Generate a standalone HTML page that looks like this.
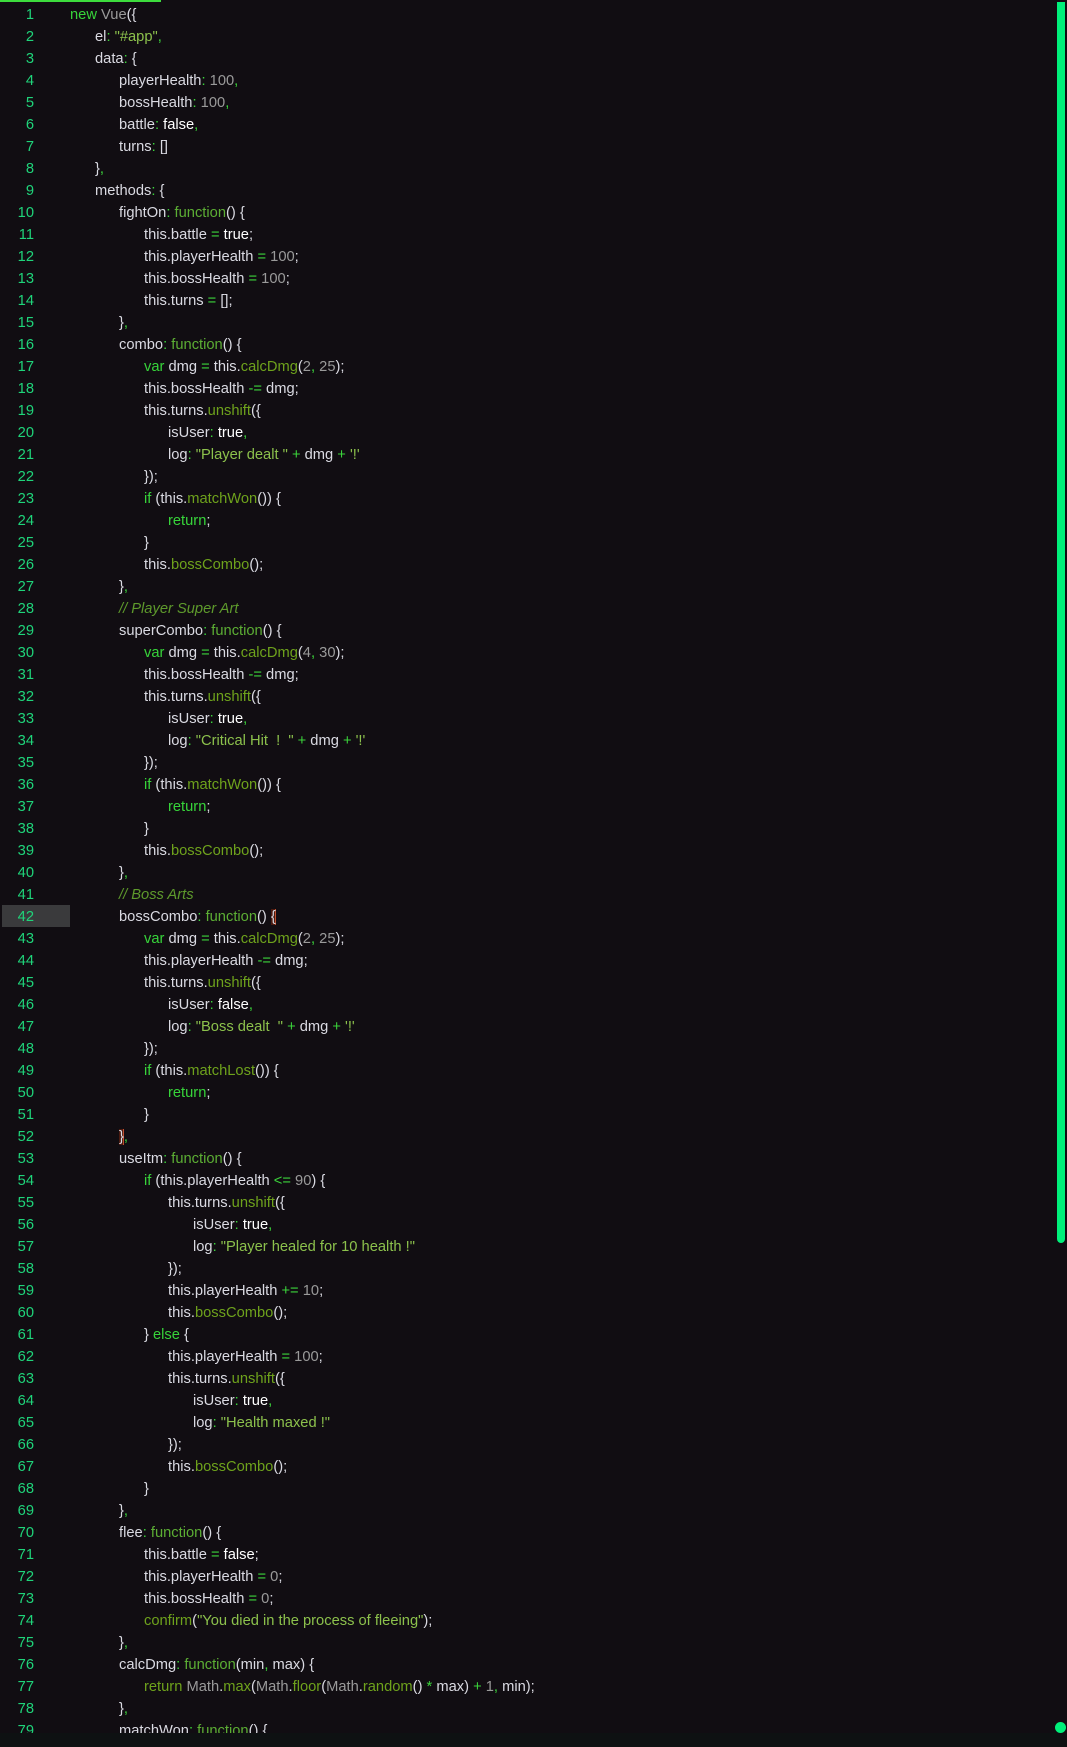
<!DOCTYPE html>
<html><head><meta charset="utf-8"><style>
html,body{margin:0;padding:0;background:#110d12;width:1067px;height:1747px;overflow:hidden;position:relative}
#top{position:absolute;left:0;top:0;width:161px;height:2px;background:#3ddc3d}
#code{position:absolute;top:4px;left:0;font-family:"Liberation Sans",sans-serif;font-size:14.7px;color:#dadae2}
.l{height:22px;line-height:22px;position:relative;white-space:pre}
.ln{position:absolute;left:0;width:34px;text-align:right;color:#1fd47a}
.t{position:absolute;top:0}
.hl{position:absolute;left:2px;top:-1px;width:68px;height:22px;background:#3a3a3c}
.k{color:#37d43a}.f{color:#5cae34}.m{color:#6ea21c}.n{color:#9a9a9a}.s{color:#8cc14c}.p{color:#3bd43b}.c{color:#5e9a2c;font-style:italic}.w{color:#fff}
#sb{position:absolute;left:1057px;top:2px;width:8px;height:1241px;background:#00f07a;border-radius:0 0 4px 4px}
#dot{position:absolute;left:1055px;top:1722px;width:11px;height:11px;border-radius:50%;background:#00f07a}
#bot{position:absolute;left:0;top:1733px;width:1067px;height:14px;background:#0e1112}
.br{background:#4a1a10;box-shadow:inset -1px 0 0 #c05030}
</style></head><body>
<div id="top"></div>
<div id="code">
<div class="l"><span class="ln">1</span><span class="t" style="left:70px"><span class="k">new</span> <span class="n">Vue</span>({</span></div>
<div class="l"><span class="ln">2</span><span class="t" style="left:95px">el<span class="p">:</span> <span class="s">"#app"</span><span class="p">,</span></span></div>
<div class="l"><span class="ln">3</span><span class="t" style="left:95px">data<span class="p">:</span> {</span></div>
<div class="l"><span class="ln">4</span><span class="t" style="left:119px">playerHealth<span class="p">:</span> <span class="n">100</span><span class="p">,</span></span></div>
<div class="l"><span class="ln">5</span><span class="t" style="left:119px">bossHealth<span class="p">:</span> <span class="n">100</span><span class="p">,</span></span></div>
<div class="l"><span class="ln">6</span><span class="t" style="left:119px">battle<span class="p">:</span> <span class="w">false</span><span class="p">,</span></span></div>
<div class="l"><span class="ln">7</span><span class="t" style="left:119px">turns<span class="p">:</span> []</span></div>
<div class="l"><span class="ln">8</span><span class="t" style="left:95px">}<span class="p">,</span></span></div>
<div class="l"><span class="ln">9</span><span class="t" style="left:95px">methods<span class="p">:</span> {</span></div>
<div class="l"><span class="ln">10</span><span class="t" style="left:119px">fightOn<span class="p">:</span> <span class="f">function</span>() {</span></div>
<div class="l"><span class="ln">11</span><span class="t" style="left:144px">this.battle <span class="p">=</span> <span class="w">true</span>;</span></div>
<div class="l"><span class="ln">12</span><span class="t" style="left:144px">this.playerHealth <span class="p">=</span> <span class="n">100</span>;</span></div>
<div class="l"><span class="ln">13</span><span class="t" style="left:144px">this.bossHealth <span class="p">=</span> <span class="n">100</span>;</span></div>
<div class="l"><span class="ln">14</span><span class="t" style="left:144px">this.turns <span class="p">=</span> [];</span></div>
<div class="l"><span class="ln">15</span><span class="t" style="left:119px">}<span class="p">,</span></span></div>
<div class="l"><span class="ln">16</span><span class="t" style="left:119px">combo<span class="p">:</span> <span class="f">function</span>() {</span></div>
<div class="l"><span class="ln">17</span><span class="t" style="left:144px"><span class="k">var</span> dmg <span class="p">=</span> this.<span class="m">calcDmg</span>(<span class="n">2</span><span class="p">,</span> <span class="n">25</span>);</span></div>
<div class="l"><span class="ln">18</span><span class="t" style="left:144px">this.bossHealth <span class="p">-=</span> dmg;</span></div>
<div class="l"><span class="ln">19</span><span class="t" style="left:144px">this.turns.<span class="m">unshift</span>({</span></div>
<div class="l"><span class="ln">20</span><span class="t" style="left:168px">isUser<span class="p">:</span> <span class="w">true</span><span class="p">,</span></span></div>
<div class="l"><span class="ln">21</span><span class="t" style="left:168px">log<span class="p">:</span> <span class="s">"Player dealt "</span> <span class="p">+</span> dmg <span class="p">+</span> <span class="s">'!'</span></span></div>
<div class="l"><span class="ln">22</span><span class="t" style="left:144px">});</span></div>
<div class="l"><span class="ln">23</span><span class="t" style="left:144px"><span class="k">if</span> (this.<span class="m">matchWon</span>()) {</span></div>
<div class="l"><span class="ln">24</span><span class="t" style="left:168px"><span class="k">return</span>;</span></div>
<div class="l"><span class="ln">25</span><span class="t" style="left:144px">}</span></div>
<div class="l"><span class="ln">26</span><span class="t" style="left:144px">this.<span class="m">bossCombo</span>();</span></div>
<div class="l"><span class="ln">27</span><span class="t" style="left:119px">}<span class="p">,</span></span></div>
<div class="l"><span class="ln">28</span><span class="t c" style="left:119px">// Player Super Art</span></div>
<div class="l"><span class="ln">29</span><span class="t" style="left:119px">superCombo<span class="p">:</span> <span class="f">function</span>() {</span></div>
<div class="l"><span class="ln">30</span><span class="t" style="left:144px"><span class="k">var</span> dmg <span class="p">=</span> this.<span class="m">calcDmg</span>(<span class="n">4</span><span class="p">,</span> <span class="n">30</span>);</span></div>
<div class="l"><span class="ln">31</span><span class="t" style="left:144px">this.bossHealth <span class="p">-=</span> dmg;</span></div>
<div class="l"><span class="ln">32</span><span class="t" style="left:144px">this.turns.<span class="m">unshift</span>({</span></div>
<div class="l"><span class="ln">33</span><span class="t" style="left:168px">isUser<span class="p">:</span> <span class="w">true</span><span class="p">,</span></span></div>
<div class="l"><span class="ln">34</span><span class="t" style="left:168px">log<span class="p">:</span> <span class="s">"Critical Hit  !  "</span> <span class="p">+</span> dmg <span class="p">+</span> <span class="s">'!'</span></span></div>
<div class="l"><span class="ln">35</span><span class="t" style="left:144px">});</span></div>
<div class="l"><span class="ln">36</span><span class="t" style="left:144px"><span class="k">if</span> (this.<span class="m">matchWon</span>()) {</span></div>
<div class="l"><span class="ln">37</span><span class="t" style="left:168px"><span class="k">return</span>;</span></div>
<div class="l"><span class="ln">38</span><span class="t" style="left:144px">}</span></div>
<div class="l"><span class="ln">39</span><span class="t" style="left:144px">this.<span class="m">bossCombo</span>();</span></div>
<div class="l"><span class="ln">40</span><span class="t" style="left:119px">}<span class="p">,</span></span></div>
<div class="l"><span class="ln">41</span><span class="t c" style="left:119px">// Boss Arts</span></div>
<div class="l"><span class="hl"></span><span class="ln">42</span><span class="t" style="left:119px">bossCombo<span class="p">:</span> <span class="f">function</span>() <span class="br">{</span></span></div>
<div class="l"><span class="ln">43</span><span class="t" style="left:144px"><span class="k">var</span> dmg <span class="p">=</span> this.<span class="m">calcDmg</span>(<span class="n">2</span><span class="p">,</span> <span class="n">25</span>);</span></div>
<div class="l"><span class="ln">44</span><span class="t" style="left:144px">this.playerHealth <span class="p">-=</span> dmg;</span></div>
<div class="l"><span class="ln">45</span><span class="t" style="left:144px">this.turns.<span class="m">unshift</span>({</span></div>
<div class="l"><span class="ln">46</span><span class="t" style="left:168px">isUser<span class="p">:</span> <span class="w">false</span><span class="p">,</span></span></div>
<div class="l"><span class="ln">47</span><span class="t" style="left:168px">log<span class="p">:</span> <span class="s">"Boss dealt  "</span> <span class="p">+</span> dmg <span class="p">+</span> <span class="s">'!'</span></span></div>
<div class="l"><span class="ln">48</span><span class="t" style="left:144px">});</span></div>
<div class="l"><span class="ln">49</span><span class="t" style="left:144px"><span class="k">if</span> (this.<span class="m">matchLost</span>()) {</span></div>
<div class="l"><span class="ln">50</span><span class="t" style="left:168px"><span class="k">return</span>;</span></div>
<div class="l"><span class="ln">51</span><span class="t" style="left:144px">}</span></div>
<div class="l"><span class="ln">52</span><span class="t" style="left:119px"><span class="br">}</span><span class="p">,</span></span></div>
<div class="l"><span class="ln">53</span><span class="t" style="left:119px">useItm<span class="p">:</span> <span class="f">function</span>() {</span></div>
<div class="l"><span class="ln">54</span><span class="t" style="left:144px"><span class="k">if</span> (this.playerHealth <span class="p">&lt;=</span> <span class="n">90</span>) {</span></div>
<div class="l"><span class="ln">55</span><span class="t" style="left:168px">this.turns.<span class="m">unshift</span>({</span></div>
<div class="l"><span class="ln">56</span><span class="t" style="left:193px">isUser<span class="p">:</span> <span class="w">true</span><span class="p">,</span></span></div>
<div class="l"><span class="ln">57</span><span class="t" style="left:193px">log<span class="p">:</span> <span class="s">"Player healed for 10 health !"</span></span></div>
<div class="l"><span class="ln">58</span><span class="t" style="left:168px">});</span></div>
<div class="l"><span class="ln">59</span><span class="t" style="left:168px">this.playerHealth <span class="p">+=</span> <span class="n">10</span>;</span></div>
<div class="l"><span class="ln">60</span><span class="t" style="left:168px">this.<span class="m">bossCombo</span>();</span></div>
<div class="l"><span class="ln">61</span><span class="t" style="left:144px">} <span class="k">else</span> {</span></div>
<div class="l"><span class="ln">62</span><span class="t" style="left:168px">this.playerHealth <span class="p">=</span> <span class="n">100</span>;</span></div>
<div class="l"><span class="ln">63</span><span class="t" style="left:168px">this.turns.<span class="m">unshift</span>({</span></div>
<div class="l"><span class="ln">64</span><span class="t" style="left:193px">isUser<span class="p">:</span> <span class="w">true</span><span class="p">,</span></span></div>
<div class="l"><span class="ln">65</span><span class="t" style="left:193px">log<span class="p">:</span> <span class="s">"Health maxed !"</span></span></div>
<div class="l"><span class="ln">66</span><span class="t" style="left:168px">});</span></div>
<div class="l"><span class="ln">67</span><span class="t" style="left:168px">this.<span class="m">bossCombo</span>();</span></div>
<div class="l"><span class="ln">68</span><span class="t" style="left:144px">}</span></div>
<div class="l"><span class="ln">69</span><span class="t" style="left:119px">}<span class="p">,</span></span></div>
<div class="l"><span class="ln">70</span><span class="t" style="left:119px">flee<span class="p">:</span> <span class="f">function</span>() {</span></div>
<div class="l"><span class="ln">71</span><span class="t" style="left:144px">this.battle <span class="p">=</span> <span class="w">false</span>;</span></div>
<div class="l"><span class="ln">72</span><span class="t" style="left:144px">this.playerHealth <span class="p">=</span> <span class="n">0</span>;</span></div>
<div class="l"><span class="ln">73</span><span class="t" style="left:144px">this.bossHealth <span class="p">=</span> <span class="n">0</span>;</span></div>
<div class="l"><span class="ln">74</span><span class="t" style="left:144px"><span class="m">confirm</span>(<span class="s">"You died in the process of fleeing"</span>);</span></div>
<div class="l"><span class="ln">75</span><span class="t" style="left:119px">}<span class="p">,</span></span></div>
<div class="l"><span class="ln">76</span><span class="t" style="left:119px">calcDmg<span class="p">:</span> <span class="f">function</span>(min<span class="p">,</span> max) {</span></div>
<div class="l"><span class="ln">77</span><span class="t" style="left:144px"><span class="m">return</span> <span class="n">Math</span>.<span class="m">max</span>(<span class="n">Math</span>.<span class="m">floor</span>(<span class="n">Math</span>.<span class="m">random</span>() <span class="p">*</span> max) <span class="p">+</span> <span class="n">1</span><span class="p">,</span> min);</span></div>
<div class="l"><span class="ln">78</span><span class="t" style="left:119px">}<span class="p">,</span></span></div>
<div class="l"><span class="ln">79</span><span class="t" style="left:119px">matchWon<span class="p">:</span> <span class="f">function</span>() {</span></div>
</div>
<div id="sb"></div>
<div id="dot"></div>
<div id="bot"></div>
</body></html>
